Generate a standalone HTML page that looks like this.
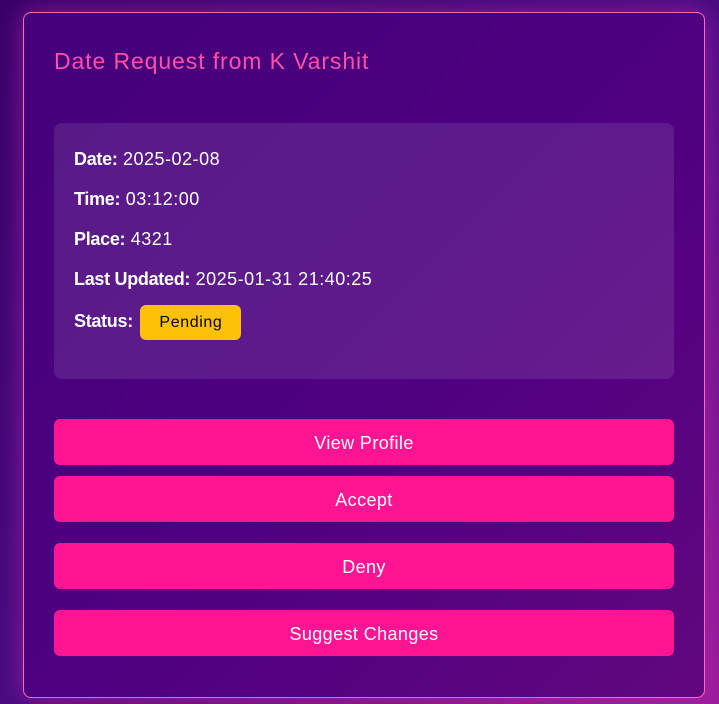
<!DOCTYPE html>
<html><head><style>
*{margin:0;padding:0;box-sizing:border-box}
body{width:719px;height:704px;overflow:hidden;background:linear-gradient(135deg,#3a0068 0%,#4a0a80 50%,#9a1a9a 100%);font-family:"Liberation Sans",sans-serif;position:relative}
.card{position:absolute;left:23px;top:12px;width:682px;height:686px;border:1px solid #ff6ab8;border-radius:8px;background:linear-gradient(135deg,#45007a 0%,#4d0080 50%,#620680 100%);box-shadow:0 0 25px rgba(200,60,200,.5)}
h2{position:absolute;left:30px;top:35px;font-size:23px;font-weight:normal;color:#ff4fa8;letter-spacing:0.9px}
.info{position:absolute;left:30px;top:110px;width:620px;height:256px;border-radius:8px;background:rgba(255,255,255,.1);color:#fff;font-size:18px;letter-spacing:0.5px}
.row{position:absolute;left:20px}
b{font-weight:bold;letter-spacing:-0.3px}
.badge{display:inline-block;background:#ffc107;color:#000;border-radius:6px;padding:0 19px;height:35px;line-height:36px;font-size:16px;margin-left:2px;letter-spacing:0.6px;font-weight:500}
.btn{position:absolute;left:30px;width:620px;height:46px;border-radius:6px;background:#ff1493;color:#fff;font-size:18px;text-align:center;line-height:49px;letter-spacing:0.4px}
</style></head><body>
<div class="card">
<h2>Date Request from K Varshit</h2>
<div class="info">
<div class="row" style="top:26px"><b>Date:</b> 2025-02-08</div>
<div class="row" style="top:66px"><b>Time:</b> 03:12:00</div>
<div class="row" style="top:106px"><b>Place:</b> 4321</div>
<div class="row" style="top:146px"><b>Last Updated:</b> 2025-01-31 21:40:25</div>
<div class="row" style="top:181px;line-height:35px"><b>Status:</b> <span class="badge">Pending</span></div>
</div>
<div class="btn" style="top:406px">View Profile</div>
<div class="btn" style="top:463px">Accept</div>
<div class="btn" style="top:530px">Deny</div>
<div class="btn" style="top:597px">Suggest Changes</div>
</div>
</body></html>
